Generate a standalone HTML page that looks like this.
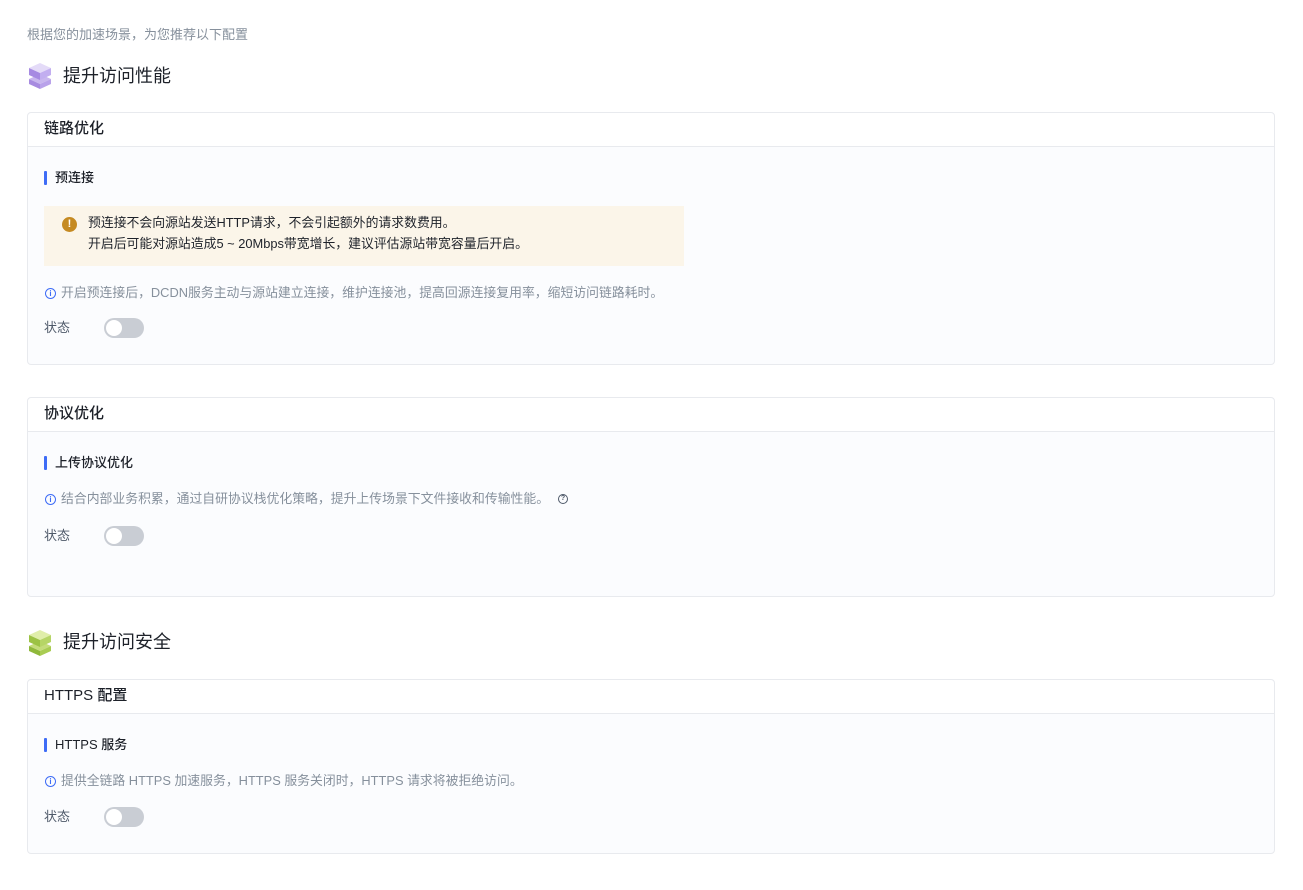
<!DOCTYPE html>
<html><head><meta charset="utf-8"><style>
body{margin:0;width:1303px;height:890px;background:#fff;font-family:"Liberation Sans","Noto Sans CJK SC",sans-serif;position:relative;overflow:hidden;color:#1d2129}
.a{position:absolute;white-space:nowrap;line-height:1}
.card{position:absolute;left:27px;width:1248px;border:1px solid #e8eaee;border-radius:4px;background:#fbfcfe;box-sizing:border-box}
.card .h{height:33px;background:#fff;border-bottom:1px solid #e8eaee;border-radius:4px 4px 0 0;font-size:15px;font-weight:500;padding-left:16px;line-height:32px;color:#1d2129}
.bar{position:absolute;width:3px;height:14px;background:#3e6cf6;border-radius:1px}
.sub{font-size:13px;font-weight:500}
.info{font-size:12.85px;color:#86909c}
.ii{position:absolute;width:9px;height:9px;border:1.2px solid #3e6cf6;border-radius:50%;color:#3e6cf6;font-size:8px;text-align:center;line-height:9px;font-weight:bold}
.tg{position:absolute;width:40px;height:20px;background:#c9cdd4;border-radius:10px}
.tg::after{content:"";position:absolute;left:2px;top:2px;width:16px;height:16px;border-radius:50%;background:#fff}
.lbl{font-size:13px;color:#4e5969}
</style></head><body>
<div class="a" style="left:27px;top:28px;font-size:13px;color:#86909c">根据您的加速场景，为您推荐以下配置</div>
<svg class="a" style="left:28px;top:62px" width="24" height="27" viewBox="0 0 24 27"><path d="M12 12 L23 17 L12 22 L1 17Z" fill="#c8b6ee"/><path d="M1 17 L12 22 L12 27 L1 22Z" fill="#a78be0"/><path d="M23 17 L12 22 L12 27 L23 22Z" fill="#b9a2ea"/><path d="M12 1 L23 6 L12 11 L1 6Z" fill="#e4dbf8"/><path d="M1 6 L12 11 L12 18 L1 13Z" fill="#a68ae2"/><path d="M23 6 L12 11 L12 18 L23 13Z" fill="#c2aef0"/></svg>
<div class="a" style="left:63px;top:67px;font-size:18px">提升访问性能</div>

<div class="card" style="top:112px;height:253px"><div class="h">链路优化</div></div>
<div class="bar" style="left:44px;top:171px"></div><div class="a sub" style="left:55px;top:171px">预连接</div>
<div class="a" style="left:44px;top:206px;width:640px;height:60px;background:#fbf5e9"></div>
<div class="a" style="left:62px;top:217px;width:15px;height:15px;border-radius:50%;background:#c58a22;color:#fff;font-size:11px;font-weight:bold;text-align:center;line-height:15px">!</div>
<div class="a" style="left:88px;top:217px;font-size:12.85px">预连接不会向源站发送HTTP请求，不会引起额外的请求数费用。</div>
<div class="a" style="left:88px;top:238px;font-size:12.85px">开启后可能对源站造成5 ~ 20Mbps带宽增长，建议评估源站带宽容量后开启。</div>
<div class="ii" style="left:45px;top:288px">i</div><div class="a info" style="left:61px;top:287px">开启预连接后，DCDN服务主动与源站建立连接，维护连接池，提高回源连接复用率，缩短访问链路耗时。</div>
<div class="a lbl" style="left:44px;top:321px">状态</div><div class="tg" style="left:104px;top:318px"></div>

<div class="card" style="top:397px;height:200px"><div class="h">协议优化</div></div>
<div class="bar" style="left:44px;top:456px"></div><div class="a sub" style="left:55px;top:456px">上传协议优化</div>
<div class="ii" style="left:45px;top:494px">i</div><div class="a info" style="left:61px;top:493px">结合内部业务积累，通过自研协议栈优化策略，提升上传场景下文件接收和传输性能。</div>
<div class="a" style="left:558px;top:494px;width:8px;height:8px;border:1.2px solid #4e5969;border-radius:50%;font-size:7px;text-align:center;line-height:8px;color:#4e5969;font-weight:bold">?</div>
<div class="a lbl" style="left:44px;top:529px">状态</div><div class="tg" style="left:104px;top:526px"></div>

<svg class="a" style="left:28px;top:629px" width="24" height="27" viewBox="0 0 24 27"><path d="M12 12 L23 17 L12 22 L1 17Z" fill="#c4dc7a"/><path d="M1 17 L12 22 L12 27 L1 22Z" fill="#8fb83a"/><path d="M23 17 L12 22 L12 27 L23 22Z" fill="#a9cc52"/><path d="M12 1 L23 6 L12 11 L1 6Z" fill="#e0eeaa"/><path d="M1 6 L12 11 L12 18 L1 13Z" fill="#9cc244"/><path d="M23 6 L12 11 L12 18 L23 13Z" fill="#b6d566"/></svg>
<div class="a" style="left:63px;top:633px;font-size:18px">提升访问安全</div>

<div class="card" style="top:679px;height:175px"><div class="h">HTTPS 配置</div></div>
<div class="bar" style="left:44px;top:738px"></div><div class="a sub" style="left:55px;top:738px">HTTPS 服务</div>
<div class="ii" style="left:45px;top:776px">i</div><div class="a info" style="left:61px;top:775px">提供全链路 HTTPS 加速服务，HTTPS 服务关闭时，HTTPS 请求将被拒绝访问。</div>
<div class="a lbl" style="left:44px;top:810px">状态</div><div class="tg" style="left:104px;top:807px"></div>
</body></html>
